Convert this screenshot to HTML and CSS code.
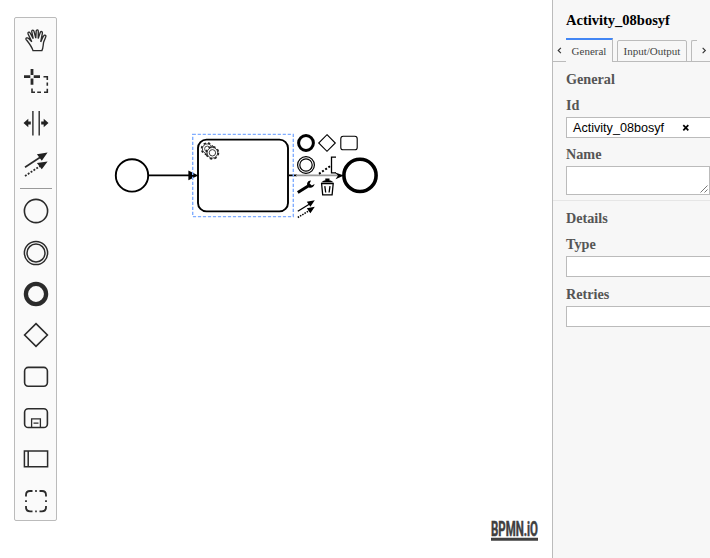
FILE: index.html
```html
<!DOCTYPE html>
<html lang="en">
<head>
<meta charset="utf-8">
<title>BPMN modeler</title>
<link rel="stylesheet" href="styles.css">
</head>
<body>
<main class="canvas">
  <svg class="diagram" width="552" height="558" viewBox="0 0 552 558">
    <g fill="#fff" stroke="#000" stroke-width="1.9">
      <circle cx="132" cy="175.4" r="16.2"/>
      <path d="M149 175.4H190M289 175.4H297"/>
      <path d="M296 175.4H340" stroke="#999" stroke-width="1.6"/>
      <rect x="198" y="139.6" width="90" height="71.8" rx="8.5"/>
      <path d="M188.4 170.6L198.3 175.4L188.4 180.2Z" fill="#000" stroke="none"/>
      <path d="M334.5 172.3L344 175.4L335.5 179.3L338 175.4Z" fill="#000" stroke="none"/>
      <circle cx="360" cy="175.4" r="16.1" stroke-width="3.6"/>
    </g>
    <g fill="#fff" stroke="#222">
      <g transform="translate(207.3 148.8)">
        <circle r="5.7" stroke-width="1.7" stroke-dasharray="2.3 2.18"/>
        <circle r="4.9" stroke-width=".9"/><circle r="2.7" stroke-width=".8"/>
      </g>
      <g transform="translate(212.4 152.8)">
        <circle r="6" stroke-width="1.7" stroke-dasharray="2.5 2.21"/>
        <circle r="5.3" stroke-width=".9"/><circle r="3.2" stroke-width=".9"/>
      </g>
    </g>
    <rect x="192.7" y="134.4" width="100.6" height="82.2" fill="none" stroke="#80adff" stroke-width="1.4" stroke-dasharray="3.2 1.8"/>
  </svg>

  <nav class="palette">
    <svg class="tool" viewBox="-14 -14 28 28"><path d="M-3 10.6C-4.5 6-7.5 2.5-10 -.7C-10.5-2-8.5-2.7-7.3-1.5L-4.2 1.8L-8-6.2C-8.4-8-6.5-8.5-5.8-7L-2.8-1.3L-4.3-8.5C-4.3-10.3-2.3-10.3-2-8.7L-.2-1.8L.2-9C.6-10.7 2.3-10.4 2.3-8.8L2.2-1.4L4.3-7.7C5.1-9.1 6.7-8.4 6.4-6.9L4.7 1.8C6-.4 6.7-3.8 8.4-4.8C9.8-5.2 10.3-4 9.6-2.8L7.6 2.3C7 5.5 7.3 8 5.9 10.6Z" stroke-width="1.35"/></svg>
    <svg class="tool" viewBox="-14 -14 28 28"><path d="M-12-4.3H-5.7M-2.3-4.3H4M-4-12V-6M-4-2.6V3.8" stroke-width="2.8"/><path d="M7.5-4.3H11.3V-1M11.3 1.5V4.8M11.3 7.7V11.2H8M5 11.2H1.2M-1 11.2H-4V7.5" stroke-width="1.6"/></svg>
    <svg class="tool" viewBox="-14 -14 28 28"><path d="M-3.1-12V12.5M3.2-12V12.5" stroke-width="1.4"/><path class="solid" d="M-12.5 0L-7.7-4.3V-1.4H-5.2V1.4H-7.7V4.3ZM12.5 0L7.7-4.3V-1.4H5.2V1.4H7.7V4.3Z"/></svg>
    <svg class="tool" viewBox="-14 -14 28 28"><path d="M-11 3.2L5-7.2" stroke-width="1.7"/><path d="M-11 12L5 1.5" stroke-width="1.8" stroke-dasharray="1.9 1.5"/><path class="solid" d="M11.6-11.6L5.8-3.2L.9-9.7ZM11.6-2.5L5.8 5.3L.9-1Z"/></svg>
    <hr class="separator">
    <svg class="tool" viewBox="-14 -14 28 28"><circle r="11.6" stroke-width="1.6"/></svg>
    <svg class="tool" viewBox="-14 -14 28 28"><circle r="11.6" stroke-width="1.5"/><circle r="9" stroke-width="1.5"/></svg>
    <svg class="tool" viewBox="-14 -14 28 28"><circle r="10.1" stroke-width="4.3"/></svg>
    <svg class="tool" viewBox="-14 -14 28 28"><path d="M0-11.4L11.4 0L0 11.4L-11.4 0Z" stroke-width="1.6"/></svg>
    <svg class="tool" viewBox="-14 -14 28 28"><rect x="-11.4" y="-9.6" width="22.8" height="18.8" rx="3.6" stroke-width="1.6"/></svg>
    <svg class="tool" viewBox="-14 -14 28 28"><rect x="-11.4" y="-9.3" width="22.8" height="18.8" rx="3.6" stroke-width="1.6"/><path d="M-4.4 9.5V.8H4.4V9.5M-2.5 5.1H2.5" stroke-width="1.3"/></svg>
    <svg class="tool" viewBox="-14 -14 28 28"><path d="M-11.6-7.9H11.6V7.7H-11.6ZM-7.8-7.9V7.7" stroke-width="1.5"/></svg>
    <svg class="tool" viewBox="-14 -14 28 28"><path d="M-10-4.5V-6Q-10-10-6-10H-3.5M3.5-10H6Q10-10 10-6V-4.5M10 5V6.3Q10 10.3 6 10.3H3.5M-3.5 10.3H-6Q-10 10.3-10 6.3V5M-.8-10H.8M-.8 10.3H.8M-10-.7V1M10-.7V1" stroke-width="1.8"/></svg>
  </nav>

  <div class="context-pad">
    <svg class="action" viewBox="-11 -11 22 22"><circle r="7.4" stroke-width="3"/></svg>
    <svg class="action" viewBox="-11 -11 22 22"><path d="M0-8.3L8.3 0L0 8.3L-8.3 0Z" stroke-width="1.1"/></svg>
    <svg class="action" viewBox="-11 -11 22 22"><rect x="-8.2" y="-6.7" width="16.4" height="13.5" rx="2.4" stroke-width="1.1"/></svg>
    <svg class="action" viewBox="-11 -11 22 22"><circle r="8.4" stroke-width="1.2"/><circle r="6.2" stroke-width="1.2"/></svg>
    <svg class="action" viewBox="-11 -11 22 22"><path d="M9-7.8H4.5V7.8H9" stroke-width="1.3"/><path d="M-8 8.8L3.4 1" stroke-width="2" stroke-dasharray="2 1.8"/></svg>
    <span class="action"></span>
    <svg class="action" viewBox="-11 -11 22 22"><path d="M-8.2 5.6L2.2-.9" stroke-width="3"/><path d="M5-6.5C1.5-6.6.2-3 1.7-.6C3.6 2 8 .8 8.6-3L5.8-1.6L3.6-3.6Z" class="solid"/></svg>
    <svg class="action" viewBox="-11 -11 22 22"><path d="M-5.4-3.3H6.2L5.1 7.9H-4.3ZM-2.2-.8L-1.3 5.5M3-.8L2.1 5.5" stroke-width="1.3"/><path d="M-6.1-4.6H6.9L3.8-6.6H2.5V-8.4H-1.7V-6.6H-3Z" class="solid"/></svg>
    <span class="action"></span>
    <svg class="action" viewBox="-11 -11 22 22"><path d="M-8.2 2.2L4-5.2" stroke-width="1.3"/><path d="M-8.2 8.5L4 1.2" stroke-width="1.5" stroke-dasharray="1.5 1.1"/><path class="solid" d="M8.8-8.7L4.4-2.2L.8-7.3ZM8.8-2.2L4.4 4.3L.8-.8Z"/></svg>
  </div>

  <svg class="brand" width="58" height="34" viewBox="-5 -8 58 34"><text x="0" y="15.5" textLength="47" lengthAdjust="spacingAndGlyphs">BPMN.iO</text><path d="M0 17.7H47V20.8H0Z"/></svg>
</main>

<aside class="properties">
  <h1 class="title">Activity_08bosyf</h1>
  <div class="tabs">
    <svg class="scroll" viewBox="0 0 14 23"><path d="M8.5 8.6L5.6 11.5L8.5 14.4"/></svg>
    <a class="tab active">General</a>
    <a class="tab">Input/Output</a>
    <span class="tab clipped"></span>
    <svg class="scroll next" viewBox="0 0 14 23"><path d="M5 8.6L7.9 11.5L5 14.4"/></svg>
  </div>
  <section class="group general">
    <h2>General</h2>
    <label>Id</label>
    <div class="field"><span>Activity_08bosyf</span><svg class="clear" viewBox="0 0 8 8"><path d="M1.3 1.2L6.3 6.4M6.3 1.2L1.3 6.4"/></svg></div>
    <label>Name</label>
    <div class="field area"><svg class="grip" viewBox="0 0 8 8"><path d="M.5 7.5L7.5 .5M4.5 7.5L7.5 4.5"/></svg></div>
  </section>
  <section class="group details">
    <h2>Details</h2>
    <label>Type</label>
    <div class="field"></div>
    <label>Retries</label>
    <div class="field"></div>
  </section>
</aside>
</body>
</html>
```
FILE: styles.css
```css
* { box-sizing: border-box; }
body {
  margin: 0;
  display: flex;
  width: 710px;
  height: 558px;
  overflow: hidden;
  background: #fff;
  font-family: "Liberation Serif", serif;
}
.canvas { position: relative; flex: 0 0 552px; }
.diagram { display: block; }

.palette {
  position: absolute;
  left: 14px;
  top: 17px;
  width: 43px;
  height: 504px;
  padding-top: 1.4px;
  display: flex;
  flex-direction: column;
  align-items: center;
  background: #fafafa;
  border: 1px solid #bbb;
  border-radius: 2px;
}
.tool {
  flex: none;
  width: 28px;
  height: 28px;
  margin: 6.7px 0;
  fill: none;
  stroke: #2b2b2b;
}
.solid { fill: #222; stroke: none; }
.separator {
  flex: none;
  width: 32px;
  height: 1px;
  margin: 3px 0 1.6px;
  border: 0;
  background: #999;
}

.context-pad {
  position: absolute;
  left: 295px;
  top: 132px;
  display: grid;
  grid-template-columns: repeat(3, 21.4px);
  grid-auto-rows: 22px;
}
.action { width: 22px; height: 22px; fill: none; stroke: #000; }
.context-pad .solid { fill: #000; stroke: none; }

.brand { position: absolute; left: 486px; top: 512px; fill: #404040; }
.brand text { font: 700 19.5px Roboto, sans-serif; stroke: #404040; stroke-width: .5px; }

.properties {
  flex: 0 0 158px;
  overflow: hidden;
  background: #f7f7f7;
  border-left: 1px solid #bbb;
}
.title {
  margin: 12px 0 0 13px;
  font-size: 14.5px;
  line-height: 17px;
  color: #000;
}
.tabs {
  display: flex;
  align-items: flex-end;
  height: 24px;
  margin-top: 9px;
  background: linear-gradient(#bbb, #bbb) bottom / 100% 1px no-repeat;
}
.scroll { flex: none; width: 13px; height: 23px; fill: none; stroke: #333; stroke-width: 1.2; }
.tab {
  flex: none;
  width: 70px;
  height: 22px;
  margin-right: 4px;
  padding-top: 4px;
  border: 1px solid #bbb;
  border-radius: 2px 2px 0 0;
  text-align: center;
  font-size: 11px;
  line-height: 13px;
  color: #444;
}
.active {
  width: 47px;
  height: 24px;
  padding-top: 5px;
  border: 0;
  border-top: 2px solid #4286f4;
  border-right: 1px solid #bbb;
  border-radius: 0;
  background: #f7f7f7;
}
.clipped { width: 6px; margin-right: 1px; border-right: 0; border-radius: 2px 0 0 0; }

.group { padding-left: 13px; }
.general { height: 139px; padding-top: 9px; border-bottom: 1px solid #e6e6e6; }
.details { padding-top: 9px; }
h2, label {
  display: block;
  margin: 0;
  font-size: 14.2px;
  line-height: 17px;
  font-weight: 700;
  color: #555;
}
h2 { margin-bottom: 9px; }
.field {
  display: flex;
  align-items: center;
  width: 160px;
  height: 21px;
  margin: 3px 0 8px;
  padding-left: 6px;
  background: #fff;
  border: 1px solid #bbb;
  font: 12.6px "Liberation Sans", sans-serif;
  color: #000;
}
.area { width: 144px; height: 29px; align-items: flex-end; justify-content: flex-end; }
.details .field { margin-bottom: 9px; }
.clear { width: 8px; height: 8px; margin-left: 18px; stroke: #000; stroke-width: 1.7; }
.grip { width: 8px; height: 8px; margin: 0 1px 1px 0; stroke: #555; stroke-width: .8; }
```
